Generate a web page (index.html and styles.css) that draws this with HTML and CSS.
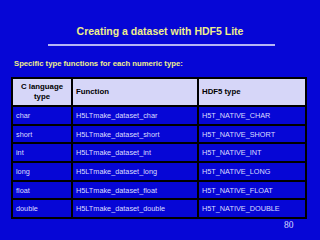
FILE: index.html
```html
<!DOCTYPE html>
<html>
<head>
<meta charset="utf-8">
<link rel="stylesheet" href="styles.css">
</head>
<body>
<div class="slide">
  <h1 class="title">Creating a dataset with HDF5 Lite</h1>
  <div class="rule"></div>
  <p class="subtitle">Specific type functions for each numeric type:</p>
  <table class="types">
    <colgroup><col class="c1"><col class="c2"><col class="c3"></colgroup>
    <thead>
      <tr><th class="center">C language<br>type</th><th>Function</th><th>HDF5 type</th></tr>
    </thead>
    <tbody>
      <tr><td>char</td><td>H5LTmake_dataset_char</td><td>H5T_NATIVE_CHAR</td></tr>
      <tr><td>short</td><td>H5LTmake_dataset_short</td><td>H5T_NATIVE_SHORT</td></tr>
      <tr><td>int</td><td>H5LTmake_dataset_int</td><td>H5T_NATIVE_INT</td></tr>
      <tr><td>long</td><td>H5LTmake_dataset_long</td><td>H5T_NATIVE_LONG</td></tr>
      <tr><td>float</td><td>H5LTmake_dataset_float</td><td>H5T_NATIVE_FLOAT</td></tr>
      <tr><td>double</td><td>H5LTmake_dataset_double</td><td>H5T_NATIVE_DOUBLE</td></tr>
    </tbody>
  </table>
  <div class="page">80</div>
</div>
</body>
</html>
```
FILE: styles.css
```css
html, body {
  margin: 0;
  padding: 0;
}
body {
  width: 320px;
  height: 240px;
  background: #0606d6;
  overflow: hidden;
  font-family: "Liberation Sans", Arial, sans-serif;
}
.slide {
  display: flex;
  flex-direction: column;
  height: 240px;
}
.title {
  margin: 24px 0 0;
  height: 14px;
  line-height: 14px;
  font-size: 10.5px;
  font-weight: bold;
  color: #eeee8c;
  text-align: center;
}
.rule {
  margin: 6px 0 0 48px;
  width: 227px;
  height: 2px;
  background: #b4b4f4;
}
.subtitle {
  margin: 12px 0 0 14px;
  height: 12px;
  line-height: 12px;
  font-size: 7.7px;
  font-weight: bold;
  color: #eeee8c;
}
.types {
  margin: 7px 0 0 11px;
  width: 294px;
  border-collapse: collapse;
  table-layout: fixed;
  font-size: 7.3px;
}
.c1 { width: 60px; }
.c2 { width: 126px; }
.c3 { width: 108px; }
.types th, .types td {
  border: 2px solid #000;
  padding: 0 0 0 3px;
  text-align: left;
  vertical-align: middle;
}
.types th {
  height: 26px;
  background: #d6d6f8;
  color: #000;
  font-weight: bold;
  font-size: 7.8px;
  line-height: 10px;
}
.types th.center {
  text-align: center;
  padding: 0;
}
.types td {
  height: 16.7px;
  color: #dcdcff;
  background: #0606d6;
}
.page {
  margin: 1px 0 0 284px;
  font-family: "Liberation Serif", "DejaVu Serif", serif;
  font-size: 9.5px;
  color: #d8d8ff;
}
```
